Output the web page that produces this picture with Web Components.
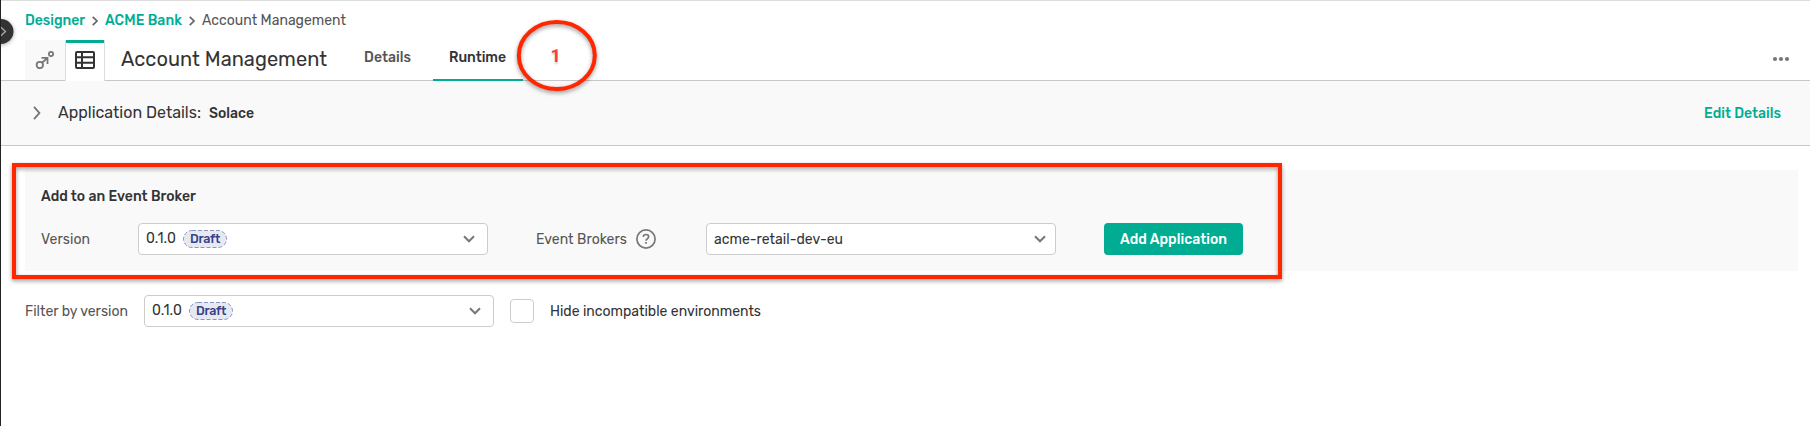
<!DOCTYPE html>
<html lang="en">
<head>
<meta charset="utf-8">
<title>Account Management</title>
<style>
body{margin:0;background:#fff;font-family:Rubik,Roboto,sans-serif;font-size:14px;color:#333}
</style>
</head>
<body>
<app-page></app-page>
<script>
function define(name, html, setup) {
  const t = document.createElement('template');
  t.innerHTML = html;
  customElements.define(name, class extends HTMLElement {
    constructor() {
      super();
      this.attachShadow({mode: 'open'}).append(t.content.cloneNode(true));
    }
    connectedCallback() { if (setup) setup.call(this, this.shadowRoot); }
  });
}

/* Text run tracked out evenly to the width given by its "w" attribute. */
define('ui-text', `<style>
:host{display:block;flex:none;white-space:nowrap;line-height:20px}
span{display:inline-block}
</style><span><slot></slot></span>`, function (root) {
  const w = parseFloat(this.getAttribute('w'));
  const s = root.querySelector('span');
  const n = this.textContent.length;
  const natural = s.getBoundingClientRect().width;
  s.style.letterSpacing = ((w - natural) / n) + 'px';
  this.style.width = w + 'px';
});

define('status-badge', `<style>
:host{display:block;flex:none;position:relative;box-sizing:border-box;width:44px;height:18px;padding-left:7px;color:#374388;font-size:12.5px;font-weight:500}
svg{position:absolute;inset:0}
ui-text{position:relative;line-height:17px}
</style><svg width="44" height="18"><rect x=".5" y=".5" width="43" height="17" rx="8.5" fill="#e7e9f2" stroke="#8c94bd" stroke-dasharray="4 2"/></svg><ui-text w="30">Draft</ui-text>`);

define('ui-select', `<style>
:host{display:flex;flex:none;align-items:center;box-sizing:border-box;width:350px;height:32px;padding:0 12px 0 7px;background:#fff;border:1px solid #ccc;border-radius:4px}
.value{display:flex;align-items:center;gap:7px;flex:1}
svg{flex:none}
</style><div class="value"><slot></slot></div><svg width="12" height="8" viewBox="0 0 12 8"><path d="M1 1.3 6 6.3 11 1.3" fill="none" stroke="#777" stroke-width="2"/></svg>`);

define('ui-button', `<style>
:host{display:flex;flex:none;align-items:center;box-sizing:border-box;width:139px;height:32px;padding:1px 0 0 16px;background:#00ad93;border-radius:4px;color:#fff;font-weight:500}
</style><slot></slot>`);

define('help-icon', `<style>
:host{display:block;flex:none;width:20px;height:20px}svg{display:block}
</style><svg width="20" height="20" viewBox="0 0 20 20" fill="none" stroke="#777"><circle cx="10" cy="10" r="9.1" stroke-width="1.7"/><path d="M7.3 8C7.3 6.4 8.4 5.5 10 5.5s2.7.9 2.7 2.3c0 2-2.7 1.9-2.7 4" stroke-width="1.6"/><path d="M10 13v1.8" stroke-width="1.8"/></svg>`);

define('crumb-bar', `<style>
:host{display:flex;align-items:center;height:40px;box-sizing:border-box;padding:1px 0 0 24px;color:#555}
.link{color:#00ad93;font-weight:500}
svg{flex:none;margin:1px 7px 0}
</style>
<ui-text class="link" w="60">Designer</ui-text>
<svg width="6" height="10" viewBox="0 0 6 10"><path d="M.7 .8 5 5 .7 9.2" fill="none" stroke="#666" stroke-width="1.7"/></svg>
<ui-text class="link" w="77">ACME Bank</ui-text>
<svg width="6" height="10" viewBox="0 0 6 10"><path d="M.7 .8 5 5 .7 9.2" fill="none" stroke="#666" stroke-width="1.7"/></svg>
<ui-text w="144">Account Management</ui-text>`);

define('title-bar', `<style>
:host{display:flex;height:41px;box-sizing:border-box;border-bottom:1px solid #c8c8c8;padding-left:24px}
.tab{flex:none;box-sizing:border-box;height:41px}
.graph{width:40px;height:40px;background:#f9f9f9;padding:10px 0 0 10px}
.table{width:40px;border:1px solid #ddd;border-width:0 1px;padding:0 0 0 9px;background:linear-gradient(#00ad93,#00ad93) 0 0/38px 3px no-repeat #fff}
.table svg{margin-top:10px}
svg{display:block}
.title{font-size:20px;line-height:24px;margin:7px 0 0 16px}
.nav{box-sizing:border-box;width:90px;height:41px;padding:8px 0 0 16px;font-weight:500;color:#555}
.active{border-bottom:2px solid #00ad93;color:#333}
.more{margin:16px 20px 0 auto}
</style>
<div class="tab graph"><svg width="20" height="20" viewBox="0 0 20 20" fill="none" stroke="#777" stroke-width="1.8"><circle cx="4.8" cy="15" r="3.2"/><circle cx="16" cy="4" r="2.1"/><path d="M7.3 12.5 12.5 7.9M6.5 7.9h6v6"/></svg></div>
<div class="tab table"><svg width="20" height="20" viewBox="0 0 20 20" fill="none" stroke="#333" stroke-width="2"><rect x="1" y="2" width="18" height="16" rx="1"/><path d="M1 7.3h18M1 12.7h18M7 2v16"/></svg></div>
<ui-text class="title" w="206">Account Management</ui-text>
<div class="nav" style="margin-left:21px"><ui-text w="47">Details</ui-text></div>
<div class="nav active" style="margin-left:-5px"><ui-text w="57">Runtime</ui-text></div>
<svg class="more" width="18" height="6" fill="#777"><circle cx="3" cy="3" r="2.1"/><circle cx="9" cy="3" r="2.1"/><circle cx="15" cy="3" r="2.1"/></svg>`);

define('details-bar', `<style>
:host{display:flex;align-items:center;box-sizing:border-box;height:65px;padding:0 29px 0 32px;background:#f9f9f9;border-bottom:1px solid #c8c8c8}
.h{font-size:16px;margin-left:17px}
.v{font-weight:500;margin:1px 0 0 8px}
.e{font-weight:500;color:#00ad93;margin:1px 0 0 auto}
</style><svg width="8" height="14" viewBox="0 0 8 14"><path d="M1 .8 6.4 7 1 13.2" fill="none" stroke="#777" stroke-width="1.9"/></svg>
<ui-text class="h" w="143">Application Details:</ui-text><ui-text class="v" w="45">Solace</ui-text><ui-text class="e" w="77">Edit Details</ui-text>`);

define('broker-panel', `<style>
:host{display:block;box-sizing:border-box;height:101px;margin:24px 12px 0 24px;padding:17px 0 0 16px;background:#f9f9f9}
.row{display:flex;align-items:center;margin-top:16px}
.l{color:#555;padding-top:1px}
.head{font-weight:500}
</style><ui-text class="head" w="155">Add to an Event Broker</ui-text>
<div class="row"><ui-text class="l" w="49">Version</ui-text>
<ui-select style="margin-left:48px"><ui-text w="30">0.1.0</ui-text><status-badge></status-badge></ui-select>
<ui-text class="l" w="91" style="margin-left:48px">Event Brokers</ui-text><help-icon style="margin-left:9px"></help-icon>
<ui-select style="margin-left:50px;padding-right:9px"><ui-text w="129" style="padding-top:1px">acme-retail-dev-eu</ui-text></ui-select>
<ui-button style="margin-left:48px"><ui-text w="107">Add Application</ui-text></ui-button></div>`);

define('filter-row', `<style>
:host{display:flex;align-items:center;margin:24px 0 0 24px}
.l{color:#555}
.l,.t{padding-top:1px}
.box{flex:none;box-sizing:border-box;width:24px;height:24px;margin:0 16px;border:1px solid #ccc;border-radius:4px;background:#fff}
</style><ui-text class="l" w="103">Filter by version</ui-text>
<ui-select style="margin-left:16px"><ui-text w="30">0.1.0</ui-text><status-badge></status-badge></ui-select>
<div class="box"></div><ui-text class="t" w="211">Hide incompatible environments</ui-text>`);

define('side-handle', `<style>
:host{position:absolute;left:0;top:14px;width:20px;height:36px}svg{display:block;overflow:visible}
</style><svg width="20" height="36"><circle cx="1" cy="17.5" r="12.5" fill="#333" style="filter:drop-shadow(0 1px 2px #0005)"/><path d="M0 12.5 5.5 17.5 0 22.5" fill="none" stroke="#aaa" stroke-width="1.3"/></svg>`);

define('step-callout', `<style>
:host{position:absolute;left:512px;top:15px;width:90px;height:82px}
svg{position:absolute;inset:0;filter:drop-shadow(0 2px 2px #0006)}
b{position:absolute;left:38.5px;top:30px;font:700 18px/22px Roboto,sans-serif;color:#ff3b3b;text-shadow:0 2px 2px #0003}
</style><svg width="90" height="82"><ellipse cx="44.8" cy="40.5" rx="38" ry="33.5" fill="none" stroke="#ff2600" stroke-width="4"/></svg><b>1</b>`);

define('highlight-box', `<style>
:host{position:absolute;left:12px;top:163px;width:1270px;height:116px;box-sizing:border-box;border:4px solid #ff2600;filter:drop-shadow(0 2px 2px #0006)}
</style>`);

define('app-page', `<style>
:host{display:block;position:relative;box-sizing:border-box;width:1810px;height:426px;overflow:hidden;border-left:1px solid #222}
.top{position:absolute;left:-1px;right:0;top:0;height:1px;background:#ddd}
side-handle,step-callout,highlight-box{transform:translateX(-1px)}
</style><div class="top"></div><crumb-bar></crumb-bar><title-bar></title-bar><details-bar></details-bar><broker-panel></broker-panel><filter-row></filter-row>
<side-handle></side-handle><step-callout></step-callout><highlight-box></highlight-box>`);
</script>
</body>
</html>
